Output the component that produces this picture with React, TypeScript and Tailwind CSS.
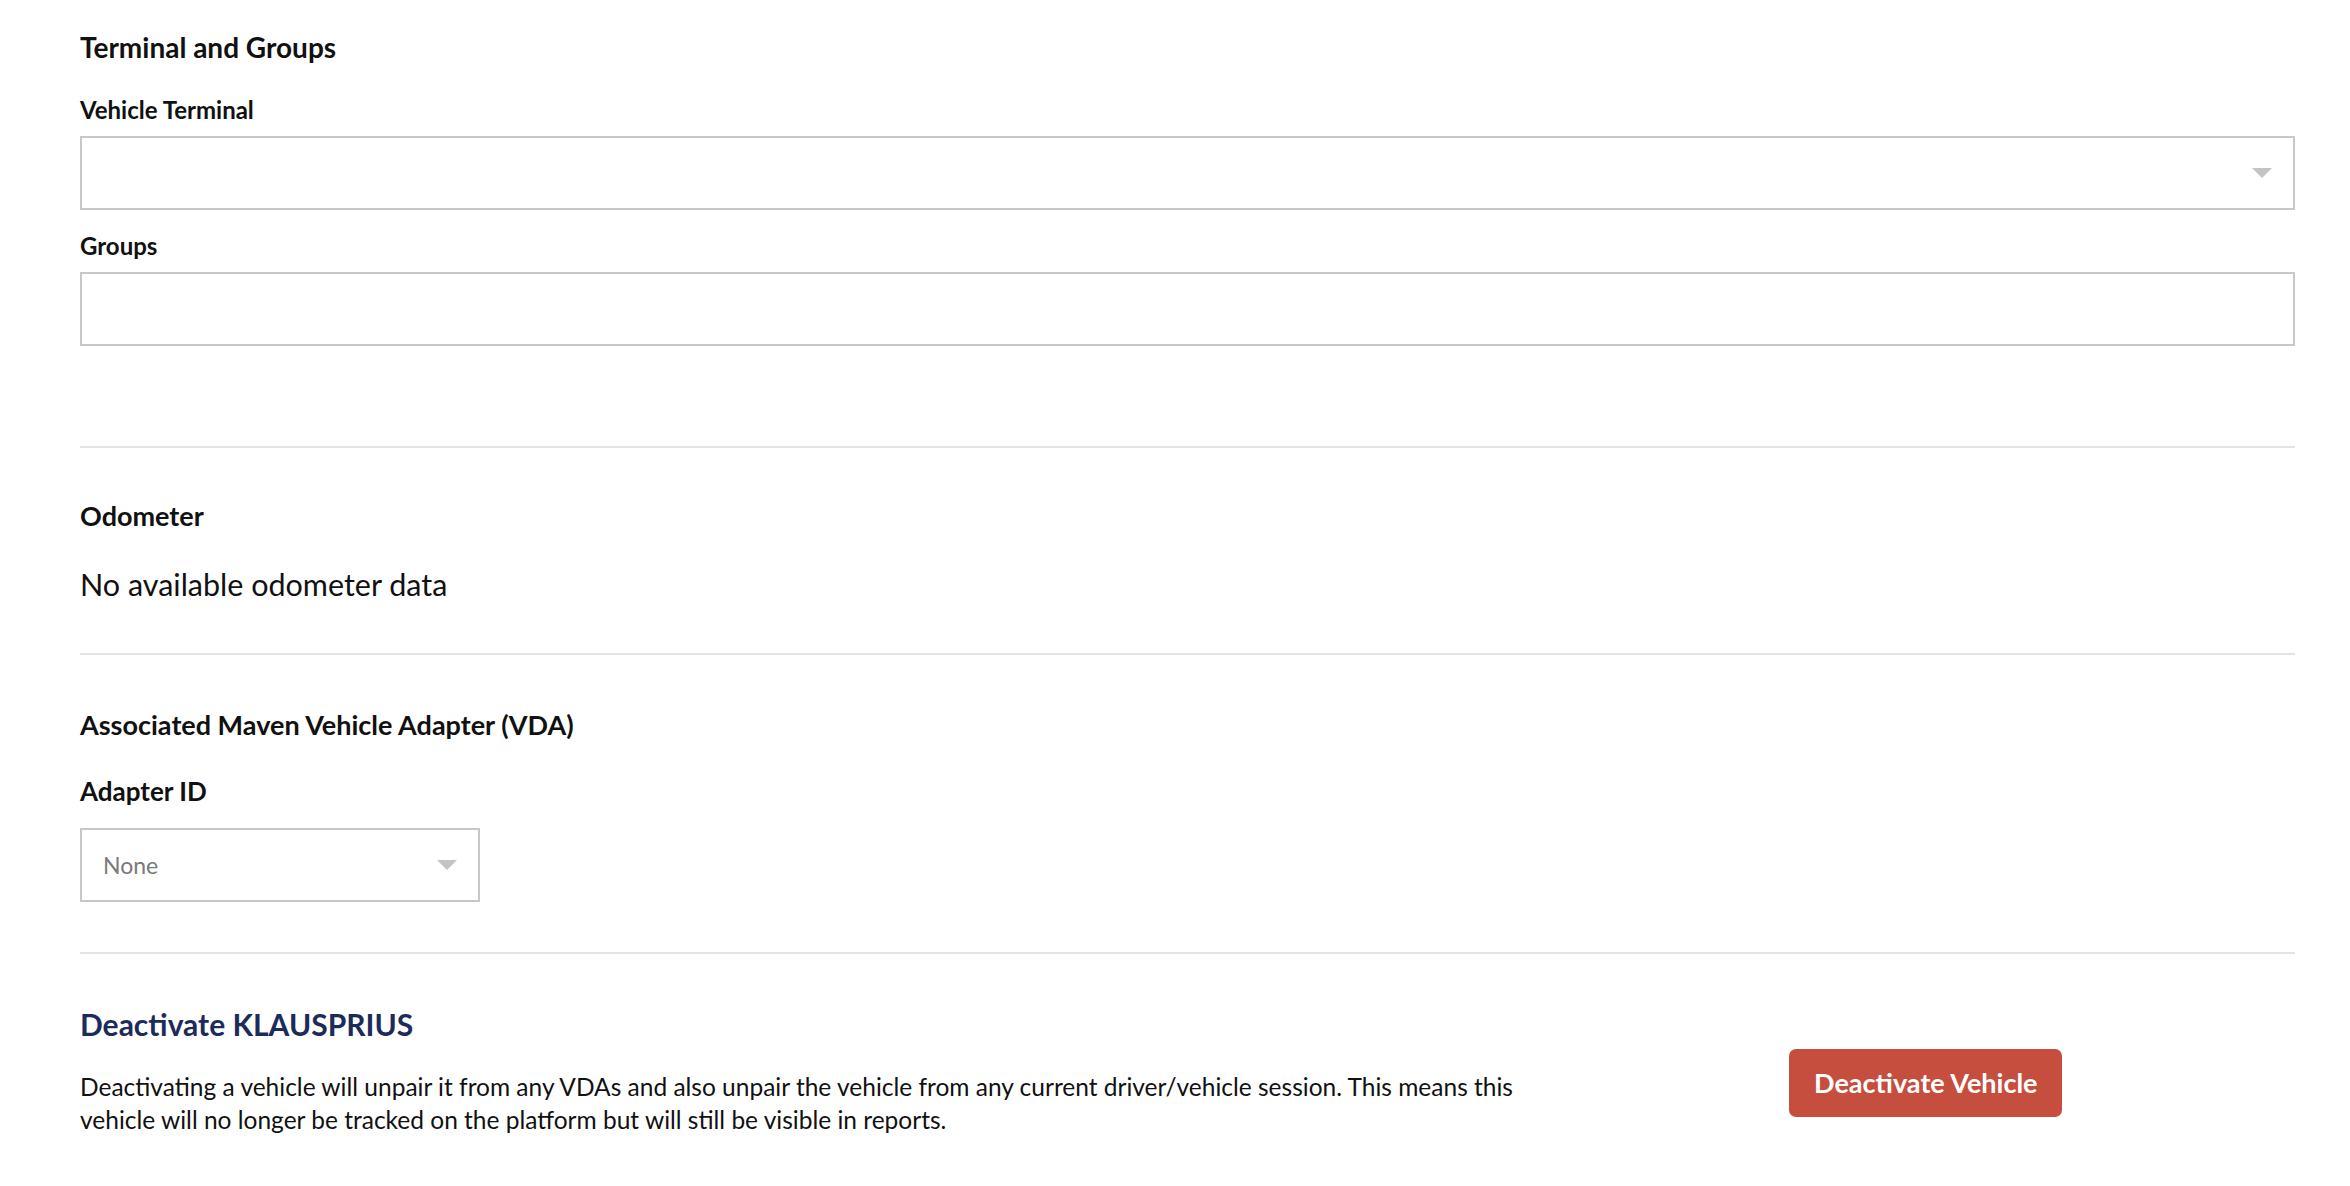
import React from "react";

function Caret() {
  return (
    <svg width="20" height="10" viewBox="0 0 20 10" className="shrink-0">
      <path d="M0 0 L20 0 L10 10 Z" fill="#c4c4c4" />
    </svg>
  );
}

function SelectBox({ value, className = "" }: { value?: string; className?: string }) {
  return (
    <div
      className={`flex h-[74px] items-center justify-between border-2 border-[#c8c8c8] bg-white pl-[21px] pr-[21px] ${className}`}
    >
      <span className="text-[23px] text-[#7a7a7a]">{value ?? ""}</span>
      <Caret />
    </div>
  );
}

function Divider() {
  return <div className="h-[2px] w-full bg-[#e4e4e4]" />;
}

export default function App() {
  return (
    <div
      className="min-h-[1186px] w-full bg-white pl-[80px] pr-[55px] pt-[29px] text-[#111]"
      style={{ fontFamily: "Lato, 'Liberation Sans', sans-serif" }}
    >
      {/* terminal & groups */}
      <section className="pb-[100px]">
        <h2 className="text-[28px] font-bold leading-[36px]">Terminal and Groups</h2>
        <label className="mt-[31px] block text-[24px] font-bold leading-[28px]">
          Vehicle Terminal
        </label>
        <SelectBox className="mt-[12px]" />
        <label className="mt-[22px] block text-[24px] font-bold leading-[28px]">Groups</label>
        <div className="mt-[12px] h-[74px] border-2 border-[#c8c8c8] bg-white" />
      </section>

      <Divider />

      {/* odometer */}
      <section className="pb-[49px] pt-[50px]">
        <h3 className="text-[27px] font-bold leading-[36px]">Odometer</h3>
        <p className="mt-[30px] text-[30.5px] leading-[40px]">No available odometer data</p>
      </section>

      <Divider />

      {/* adapter */}
      <section className="pb-[50px] pt-[52px]">
        <h3 className="text-[27px] font-bold leading-[36px]">
          Associated Maven Vehicle Adapter (VDA)
        </h3>
        <label className="mt-[30px] block text-[26px] font-bold leading-[36px]">Adapter ID</label>
        <SelectBox value="None" className="mt-[19px] w-[400px]" />
      </section>

      <Divider />

      {/* deactivate */}
      <section className="grid grid-cols-3 pt-[52px]">
        <div className="col-span-2">
          <h3 className="text-[30px] font-bold leading-[36px] text-[#1d2b5a]">
            Deactivate KLAUSPRIUS
          </h3>
          <p className="mt-[28px] whitespace-nowrap text-[24.5px] leading-[33px]">
            Deactivating a vehicle will unpair it from any VDAs and also unpair the vehicle from
            any current driver/vehicle session. This means this
            <br />
            vehicle will no longer be tracked on the platform but will still be visible in reports.
          </p>
        </div>
        <div className="flex justify-center pt-[43px]">
          <button className="h-[68px] w-[273px] rounded-[7px] bg-[#c64e3e] text-[27px] font-bold text-white">
            Deactivate Vehicle
          </button>
        </div>
      </section>
    </div>
  );
}
